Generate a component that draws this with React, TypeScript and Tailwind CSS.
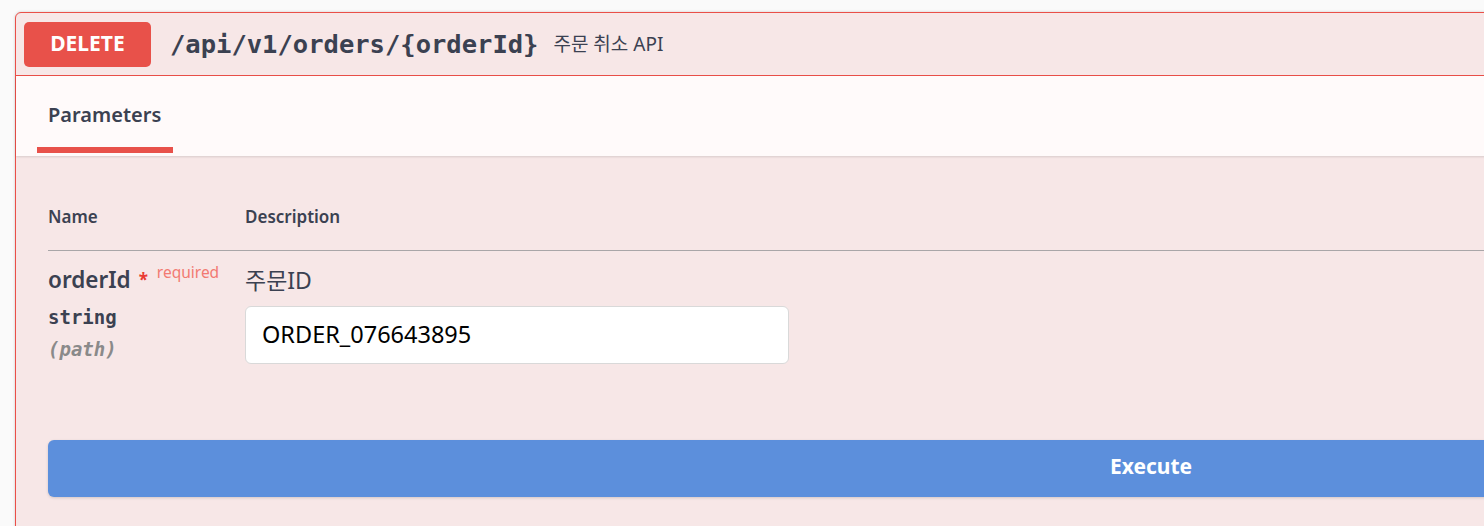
import React from "react";

const sans = "font-['Noto_Sans','Noto_Sans_CJK_KR',sans-serif]";
const mono = "font-['DejaVu_Sans_Mono','Liberation_Mono',monospace]";

export default function App() {
  return (
    <div className={`w-[1484px] h-[526px] overflow-hidden bg-[#fafafa] pt-3 pl-[15px] ${sans} text-[#3b4151]`}>
      <div className="w-[2272px] rounded-[6px] border border-[#ea4f48] bg-[#f7e7e7] shadow-[0_0_3px_rgba(0,0,0,0.19)]">
        {/* summary */}
        <div className="flex h-[63px] items-center border-b border-[#ea4f48] px-2">
          <div className="flex h-[45px] w-[127px] items-center justify-center rounded-[5px] bg-[#e8514a] text-[21px] font-bold text-white">
            DELETE
          </div>
          <span className={`ml-[19px] ${mono} text-[25.5px] font-bold`}>/api/v1/orders/{"{orderId}"}</span>
          <span className="ml-[15px] text-[19px]">주문 취소 API</span>
        </div>

        {/* tabs */}
        <div className="h-[80px] bg-[#fffafa] shadow-[0_1px_2px_rgba(0,0,0,0.12)]">
          <div className="ml-[21px] flex w-[136px] flex-col">
            <span className="pl-[11px] pt-[26px] text-[20px] font-semibold leading-[26px]">Parameters</span>
            <div className="mt-[19px] h-[6px] bg-[#e8514a]" />
          </div>
        </div>

        {/* parameters */}
        <div className="px-8 pb-10">
          <div className="flex border-b border-[#a9a6a8] pb-[20px] pt-[48px] text-[17px] font-semibold leading-[26px]">
            <div className="w-[197px]">Name</div>
            <div>Description</div>
          </div>
          <div className="flex pt-[14px]">
            <div className="w-[197px]">
              <div className="flex items-start leading-[30px]">
                <span className="text-[22.5px] font-semibold">orderId</span>
                <span className="ml-[8px] text-[17px] font-bold text-[#ea3b33]">*</span>
                <span className="ml-[9px] -mt-[8px] text-[15.5px] text-[#f27a72]">required</span>
              </div>
              <div className={`mt-[9px] ${mono} text-[19px] font-bold leading-[26px]`}>string</div>
              <div className={`mt-[6px] ${mono} text-[19px] font-bold italic leading-[26px] text-[#8a8a8a]`}>(path)</div>
            </div>
            <div>
              <div className="text-[23px] leading-[30px]">주문ID</div>
              <div className="mt-[11px] flex h-[58px] w-[544px] items-center rounded-[6px] border border-[#d9d9d9] bg-white px-4 text-[23.5px] text-black">
                ORDER_076643895
              </div>
            </div>
          </div>
          <div className="mt-[76px] flex h-[57px] items-center justify-center rounded-[6px] bg-[#5c8fdc] pb-[3px] text-[21px] font-bold text-white shadow-[0_1px_3px_rgba(0,0,0,0.15)]">
            Execute
          </div>
        </div>
      </div>
    </div>
  );
}
